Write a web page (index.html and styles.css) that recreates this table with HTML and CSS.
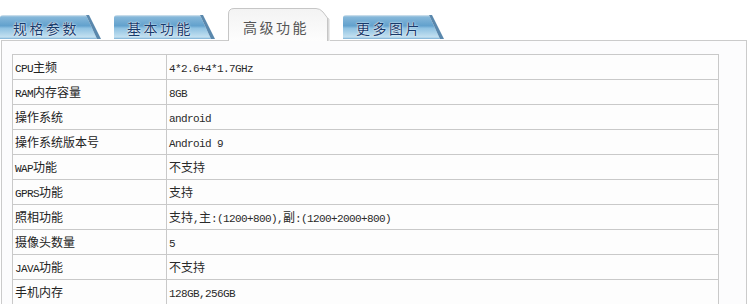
FILE: index.html
```html
<!DOCTYPE html>
<html lang="zh">
<head>
<meta charset="utf-8">
<link rel="stylesheet" href="styles.css">
</head>
<body>
<div class="tabs">
  <div class="tab">
    <svg class="tab-bg" width="101" height="24" viewBox="0 0 101 24">
      <defs>
        <linearGradient id="bl" x1="0" y1="0" x2="0" y2="1">
          <stop offset="0" stop-color="#dde8ef"/>
          <stop offset="0.08" stop-color="#86b8da"/>
          <stop offset="0.45" stop-color="#62a1cd"/>
          <stop offset="0.55" stop-color="#8fc2e2"/>
          <stop offset="0.92" stop-color="#c3e0f0"/>
          <stop offset="1" stop-color="#78aed5"/>
        </linearGradient>
      </defs>
      <path d="M0 24 V3 Q0 0 3 0 H86 L97 24 Z" fill="url(#bl)"/>
      <path d="M86 0 H89 L101 24 H97 Z" fill="#5a88ad"/>
    </svg>
    <span class="tab-label">规格参数</span>
  </div>
  <div class="tab">
    <svg class="tab-bg" width="101" height="24" viewBox="0 0 101 24">
      <path d="M0 24 V3 Q0 0 3 0 H86 L97 24 Z" fill="url(#bl)"/>
      <path d="M86 0 H89 L101 24 H97 Z" fill="#5a88ad"/>
    </svg>
    <span class="tab-label">基本功能</span>
  </div>
  <div class="tab active">
    <svg class="tab-bg" width="102" height="33" viewBox="0 0 102 33">
      <defs>
        <linearGradient id="gr" x1="0" y1="0" x2="0" y2="1">
          <stop offset="0" stop-color="#f3f3f3"/>
          <stop offset="1" stop-color="#fdfdfd"/>
        </linearGradient>
      </defs>
      <path d="M0.5 33 V6 Q0.5 0.5 6 0.5 H88 Q92 0.5 95 4 L99.5 10 V33" fill="url(#gr)" stroke="#c6c6c6"/>
      <path d="M100.5 10 V33" stroke="#d9d9d9" fill="none"/>
      <path d="M101.5 11 V33" stroke="#ececec" fill="none"/>
    </svg>
    <span class="tab-label">高级功能</span>
  </div>
  <div class="tab">
    <svg class="tab-bg" width="101" height="24" viewBox="0 0 101 24">
      <path d="M0 24 V3 Q0 0 3 0 H86 L97 24 Z" fill="url(#bl)"/>
      <path d="M86 0 H89 L101 24 H97 Z" fill="#5a88ad"/>
    </svg>
    <span class="tab-label">更多图片</span>
  </div>
</div>
<div class="panel">
  <table class="spec">
    <tr><td class="k"><span class="en">CPU</span>主频</td><td class="v"><span class="en">4*2.6+4*1.7GHz</span></td></tr>
    <tr><td class="k"><span class="en">RAM</span>内存容量</td><td class="v"><span class="en">8GB</span></td></tr>
    <tr><td class="k">操作系统</td><td class="v"><span class="en">android</span></td></tr>
    <tr><td class="k">操作系统版本号</td><td class="v"><span class="en">Android 9</span></td></tr>
    <tr><td class="k"><span class="en">WAP</span>功能</td><td class="v">不支持</td></tr>
    <tr><td class="k"><span class="en">GPRS</span>功能</td><td class="v">支持</td></tr>
    <tr><td class="k">照相功能</td><td class="v">支持<span class="en">,</span>主<span class="en">:(1200+800),</span>副<span class="en">:(1200+2000+800)</span></td></tr>
    <tr><td class="k">摄像头数量</td><td class="v"><span class="en">5</span></td></tr>
    <tr><td class="k"><span class="en">JAVA</span>功能</td><td class="v">不支持</td></tr>
    <tr><td class="k">手机内存</td><td class="v"><span class="en">128GB,256GB</span></td></tr>
  </table>
</div>
</body>
</html>
```

FILE: styles.css
```css
html, body {
  margin: 0;
  padding: 0;
  background: #ffffff;
}
body {
  width: 751px;
  height: 304px;
  overflow: hidden;
  font-family: "Noto Sans CJK SC", "Liberation Sans", sans-serif;
}
.tabs {
  display: flex;
  align-items: flex-end;
  gap: 13px;
  height: 40px;
  position: relative;
  z-index: 2;
}
.tab {
  position: relative;
  width: 101px;
  height: 24px;
  margin-bottom: 1px;
  display: flex;
  align-items: center;
  justify-content: flex-start;
}
.tab.active {
  width: 102px;
  height: 33px;
  margin-bottom: -1px;
}
.tab-bg {
  position: absolute;
  left: 0;
  top: 0;
}
.tab-label {
  position: relative;
  padding-left: 13px;
  padding-top: 2px;
  font-size: 14px;
  letter-spacing: 2.5px;
  color: #173a6b;
  line-height: 1;
  text-shadow: 0 0 2px #ffffff, 0 0 1px #ffffff;
}
.tab.active .tab-label {
  padding-left: 15px;
  padding-top: 4px;
  color: #555555;
  text-shadow: none;
}
.panel {
  margin-left: 1px;
  width: 746px;
  height: 270px;
  border: 1px solid #cbcbcb;
  border-bottom: none;
  background: #fcfcfd;
  padding: 13px 0 0 10px;
  box-sizing: border-box;
}
.spec {
  border-collapse: collapse;
  width: 707px;
  background: #fdfdfd;
}
.spec td {
  border: 1px solid #c9c9c9;
  height: 24px;
  padding: 0 0 0 2px;
  font-size: 12px;
  color: #222222;
  line-height: 16px;
  white-space: nowrap;
  vertical-align: middle;
}
.spec td.k {
  width: 151px;
}
.spec td.v {
  color: #2a2a2a;
}
.en {
  font-family: "Liberation Mono", "DejaVu Sans Mono", monospace;
  font-size: 11px;
  letter-spacing: -0.6px;
  line-height: 1;
}
```
